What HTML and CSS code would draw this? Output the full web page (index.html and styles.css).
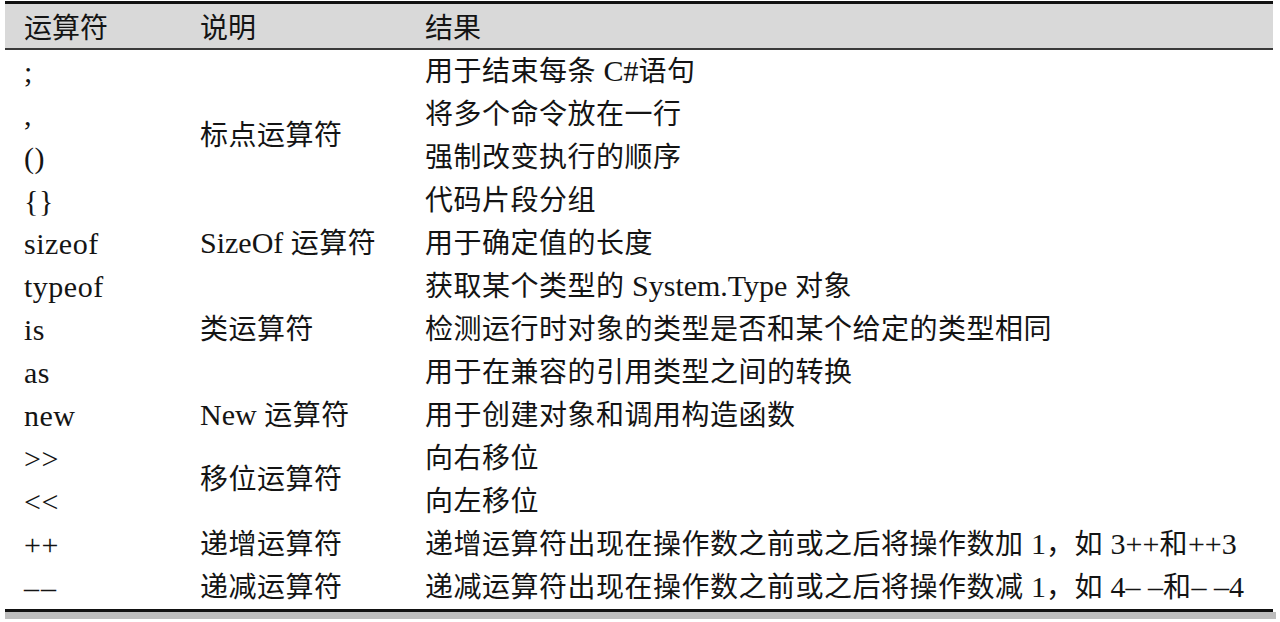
FILE: index.html
```html
<!DOCTYPE html>
<html lang="zh-CN">
<head>
    <meta charset="UTF-8">
    <meta name="viewport" content="width=device-width, initial-scale=1.0">
    <title>C# 运算符</title>
    <link rel="stylesheet" href="styles.css">
</head>
<body>
    <table class="op-table">
        <colgroup>
            <col class="col-op">
            <col class="col-desc">
            <col class="col-result">
        </colgroup>
        <thead>
            <tr>
                <th>运算符</th>
                <th>说明</th>
                <th>结果</th>
            </tr>
        </thead>
        <tbody>
            <tr>
                <td class="lat">;</td>
                <td rowspan="4">标点运算符</td>
                <td>用于结束每条 <span class="lat">C#</span>语句</td>
            </tr>
            <tr>
                <td class="lat">,</td>
                <td>将多个命令放在一行</td>
            </tr>
            <tr>
                <td class="lat">()</td>
                <td>强制改变执行的顺序</td>
            </tr>
            <tr>
                <td class="lat">{}</td>
                <td>代码片段分组</td>
            </tr>
            <tr>
                <td class="lat">sizeof</td>
                <td><span class="lat">SizeOf</span> 运算符</td>
                <td>用于确定值的长度</td>
            </tr>
            <tr>
                <td class="lat">typeof</td>
                <td rowspan="3">类运算符</td>
                <td>获取某个类型的 <span class="lat">System.Type</span> 对象</td>
            </tr>
            <tr>
                <td class="lat">is</td>
                <td>检测运行时对象的类型是否和某个给定的类型相同</td>
            </tr>
            <tr>
                <td class="lat">as</td>
                <td>用于在兼容的引用类型之间的转换</td>
            </tr>
            <tr>
                <td class="lat">new</td>
                <td><span class="lat">New</span> 运算符</td>
                <td>用于创建对象和调用构造函数</td>
            </tr>
            <tr>
                <td class="lat">&gt;&gt;</td>
                <td rowspan="2">移位运算符</td>
                <td>向右移位</td>
            </tr>
            <tr>
                <td class="lat">&lt;&lt;</td>
                <td>向左移位</td>
            </tr>
            <tr>
                <td class="lat">++</td>
                <td>递增运算符</td>
                <td>递增运算符出现在操作数之前或之后将操作数加<span class="lat"> 1</span>，如<span class="lat"> 3++</span>和<span class="lat">++3</span></td>
            </tr>
            <tr>
                <td class="lat dashes">&ndash;&ndash;</td>
                <td>递减运算符</td>
                <td>递减运算符出现在操作数之前或之后将操作数减<span class="lat"> 1</span>，如<span class="lat"> 4&ndash; &ndash;</span>和<span class="lat">&ndash; &ndash;4</span></td>
            </tr>
        </tbody>
    </table>
    <div class="table-shadow"></div>
</body>
</html>
```

FILE: styles.css
```css
body {
    margin: 0;
    padding: 1px 0 0 5px;
    background-color: #fff;
    color: #141414;
    font-family: "Liberation Serif", "Noto Sans CJK SC", serif;
    font-size: 28px;
}
.op-table {
    width: 1268px;
    border-collapse: collapse;
    table-layout: fixed;
    border-top: 3px solid #111;
    border-bottom: 3px solid #111;
}
.col-op {
    width: 176px;
}
.col-desc {
    width: 225px;
}
.op-table th {
    height: 44px;
    padding: 0 0 0 19px;
    background-color: #d9d9d9;
    border-bottom: 2px solid #3a3a3a;
    font-family: "Noto Sans CJK SC", sans-serif;
    font-weight: normal;
    font-size: 28px;
    text-align: left;
    line-height: 44px;
}
.op-table td {
    height: 43px;
    padding: 0 0 0 19px;
    line-height: 30px;
    letter-spacing: 0.5px;
    white-space: nowrap;
    vertical-align: middle;
}
.lat {
    font-family: "Liberation Serif", serif;
    font-size: 30px;
    line-height: 1;
    letter-spacing: 0;
}
.op-table .dashes {
    letter-spacing: 2px;
}
.table-shadow {
    width: 1271px;
    height: 7px;
    background-color: #bdbdbd;
}
```
